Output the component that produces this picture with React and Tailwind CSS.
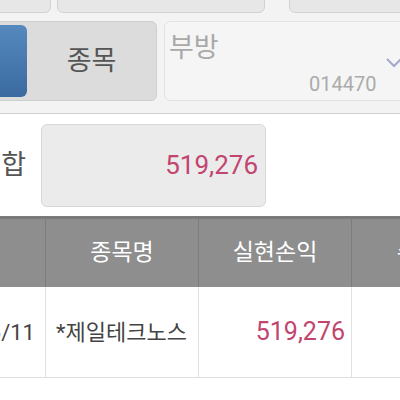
export default function App() {
  const font = { fontFamily: "Roboto, 'Noto Sans CJK KR', sans-serif" };
  return (
    <div className="w-[400px] h-[400px] overflow-hidden bg-white" style={font}>
      {/* top buttons + search row */}
      <div className="bg-[#f3f3f3] pb-[12px]">
        <div className="flex h-[15px] overflow-hidden">
          <div className="shrink-0 -ml-[60px] -mt-[17px] w-[111px] h-[30px] rounded-md border border-[#d2d2d2] bg-[#e7e7e7]" />
          <div className="shrink-0 ml-[6px] -mt-[17px] w-[208px] h-[30px] rounded-md border border-[#d2d2d2] bg-[#e7e7e7]" />
          <div className="shrink-0 ml-[24px] -mt-[17px] w-[140px] h-[30px] rounded-md border border-[#d2d2d2] bg-[#e7e7e7]" />
        </div>
        <div className="flex mt-[6px] h-[80px]">
          <div className="shrink-0 -ml-[130px] w-[287px] flex rounded-md border border-[#cfcfcf] bg-[#dcdcdc] p-[3px] pr-0">
            <div className="shrink-0 w-[153px] rounded-md bg-gradient-to-b from-[#5589be] to-[#3a6aa0]" />
            <div className="flex-1 flex items-center justify-center text-[27px] text-[#555]">종목</div>
          </div>
          <div className="shrink-0 ml-[7px] w-[250px] rounded-md border border-[#e2e2e2] bg-[#f5f5f5] relative">
            <div className="pl-[4px] pt-[9px] text-[27px] leading-[34px] text-[#a9a9a9]">부방</div>
            <div className="absolute left-[144px] bottom-[3px] text-[20px] leading-[26px] text-[#ababab]">014470</div>
            <svg className="absolute left-[221px] top-[35px]" width="16" height="12" viewBox="0 0 16 12">
              <path d="M1 2 L8 9 L15 2" fill="none" stroke="#a3aacb" strokeWidth="2" />
            </svg>
          </div>
        </div>
      </div>

      {/* total panel */}
      <div className="border-t border-[#cfcfcf] h-[103px] flex items-center bg-white">
        <div className="shrink-0 -ml-[56px] w-[82px] text-right whitespace-nowrap text-[27px] text-[#555]">손익합</div>
        <div className="shrink-0 ml-[15px] w-[225px] h-[83px] rounded-md border border-[#d8d8d8] bg-[#ebebeb] flex items-center justify-end pr-[7px] text-[26px] text-[#c2456f]">
          519,276
        </div>
      </div>

      {/* table */}
      <div className="border-t-[3px] border-[#7a7a7a]">
        <div className="flex h-[68px] bg-[#8e8e8e] text-white text-[23px] -ml-[107px]">
          <div className="w-[153px] shrink-0 flex items-center justify-center border-r border-[#7d7d7d]">매도일</div>
          <div className="w-[153px] shrink-0 flex items-center justify-center border-r border-[#7d7d7d]">종목명</div>
          <div className="w-[153px] shrink-0 flex items-center justify-center border-r border-[#7d7d7d]">실현손익</div>
          <div className="w-[153px] shrink-0 flex items-center justify-center">수익률</div>
        </div>
        <div className="flex h-[91px] border-b border-[#e0e0e0] text-[22px] -ml-[107px]">
          <div className="w-[153px] shrink-0 flex items-center justify-end pr-[10px] border-r border-[#e2e2e2] text-[#444]">06/11</div>
          <div className="w-[153px] shrink-0 flex items-center pl-[10px] border-r border-[#e2e2e2] text-[#444]">*제일테크노스</div>
          <div className="w-[153px] shrink-0 flex items-center justify-end pr-[6px] border-r border-[#e2e2e2] text-[25px] text-[#c2456f]">519,276</div>
          <div className="w-[153px] shrink-0 flex items-center pl-[50px] text-[#c2456f]">3.2</div>
        </div>
      </div>
    </div>
  );
}
